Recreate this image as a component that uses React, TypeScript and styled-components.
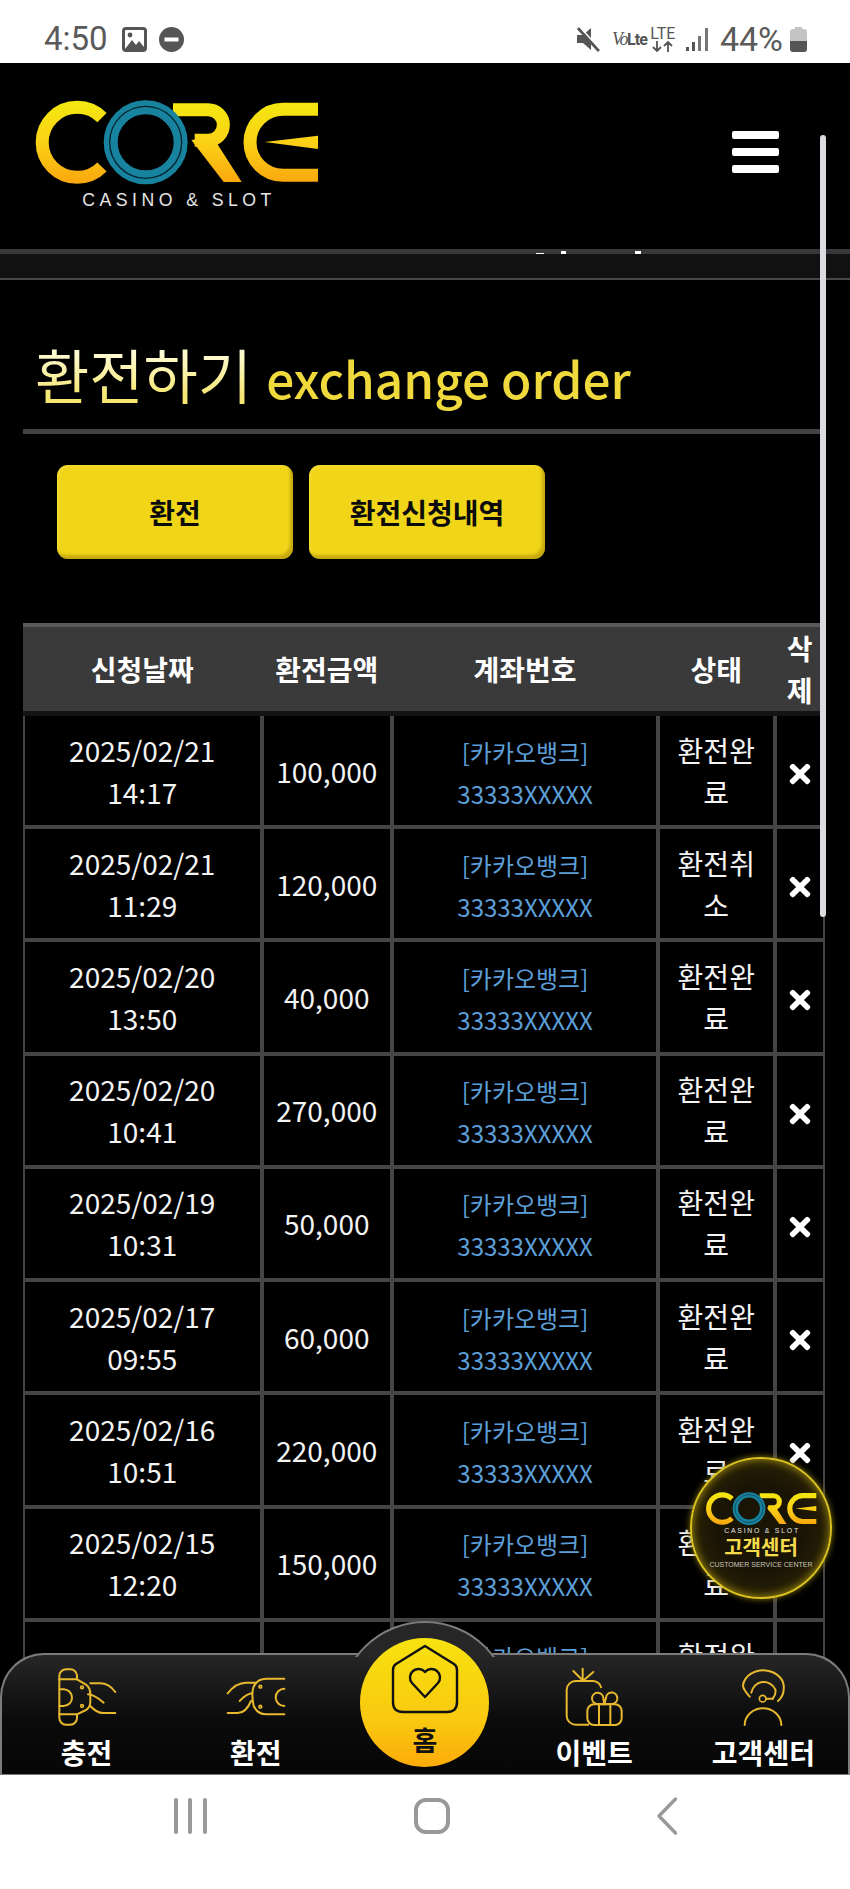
import styled, { createGlobalStyle } from "styled-components";
import { FaTimes } from "react-icons/fa";

type Order = {
  date: string;
  time: string;
  amount: string;
  status: string;
};

const orders: Order[] = [
  { date: "2025/02/21", time: "14:17", amount: "100,000", status: "환전완료" },
  { date: "2025/02/21", time: "11:29", amount: "120,000", status: "환전취소" },
  { date: "2025/02/20", time: "13:50", amount: "40,000", status: "환전완료" },
  { date: "2025/02/20", time: "10:41", amount: "270,000", status: "환전완료" },
  { date: "2025/02/19", time: "10:31", amount: "50,000", status: "환전완료" },
  { date: "2025/02/17", time: "09:55", amount: "60,000", status: "환전완료" },
  { date: "2025/02/16", time: "10:51", amount: "220,000", status: "환전완료" },
  { date: "2025/02/15", time: "12:20", amount: "150,000", status: "환전완료" },
  { date: "2025/02/15", time: "", amount: "", status: "환전완료" },
];

const columns = [238.5, 130.5, 266, 116.5, 50.5];

function Logo({ width }: { width: number }) {
  return (
    <svg viewBox="100 60 860 330" width={width} height={(width * 330) / 860}>
      <defs>
        <linearGradient id="coreGold" gradientUnits="userSpaceOnUse" x1="0" y1="62" x2="0" y2="312">
          <stop offset="0" stopColor="#f3e80f" />
          <stop offset="0.5" stopColor="#fbd116" />
          <stop offset="1" stopColor="#f9a60e" />
        </linearGradient>
      </defs>
      <g fill="none" stroke="url(#coreGold)" strokeWidth="39">
        <path d="M307 113 A105 105 0 1 0 307 261" />
        <path d="M520 89 H625 A46 46 0 0 1 625 181 H585" />
        <path d="M955 88 H850 A99 99 0 0 0 850 286 H955" />
      </g>
      <polygon points="575,180 640,172 726,306 672,306" fill="url(#coreGold)" />
      <polygon points="795,186 955,167 955,207" fill="url(#coreGold)" />
      <circle cx="438" cy="187" r="105" fill="none" stroke="#17839f" strokeWidth="42" />
      <circle cx="438" cy="187" r="108" fill="none" stroke="#04222c" strokeWidth="4" />
      <text x="248" y="378" textLength="567" fontFamily="Liberation Sans" fontSize="53" fill="#e6e6e6">
        CASINO &amp; SLOT
      </text>
    </svg>
  );
}

function ChargeIcon() {
  return (
    <NavSvg viewBox="165 203 180 180">
      <path d="M225 240 V228 A20 20 0 0 0 205 210 H192 A20 20 0 0 0 172 230 V356 A20 20 0 0 0 192 376 H205 A20 20 0 0 0 225 356 V345" />
      <path d="M172 240 H225 L252 256 Q265 265 265 285 V305 Q265 325 252 332 L225 345 H172" />
      <path d="M172 270 H185 A25 25 0 0 1 185 320 H172" />
      <path d="M265 252 H295 Q320 252 340 278" />
      <path d="M258 285 Q275 285 305 310" />
      <path d="M265 320 Q285 342 305 341 H340" />
      <circle cx="240" cy="264" r="4" />
      <circle cx="240" cy="320" r="4" />
    </NavSvg>
  );
}

function ExchangeIcon() {
  return (
    <NavSvg viewBox="675 203 180 180">
      <path d="M850 238 H795 Q770 238 758 262 Q750 280 758 320 Q770 345 795 345 H850" />
      <path d="M850 268 A26 26 0 0 0 850 320" />
      <path d="M680 282 Q705 250 735 250 H765" />
      <path d="M680 341 H710 Q735 341 750 305" />
      <path d="M716 305 Q735 285 752 282" />
      <circle cx="778" cy="262" r="4" />
      <circle cx="778" cy="322" r="4" />
    </NavSvg>
  );
}

function EventIcon() {
  return (
    <NavSvg viewBox="435 203 180 180">
      <path d="M508 376 H470 A27 27 0 0 1 443 350 V272 A27 27 0 0 1 470 245 H522 Q542 247 546 264" />
      <path d="M463 215 L490 242 M491 208 V242 M523 218 L495 242" />
      <rect x="505" y="315" width="103" height="62" rx="20" />
      <path d="M540 315 V377 M574 315 V377" />
      <path d="M556 315 L530 313 A17 17 0 1 1 553 297 L556 315 L561 296 A17 17 0 1 1 583 313 L556 315" />
    </NavSvg>
  );
}

function ServiceIcon() {
  return (
    <NavSvg viewBox="945 203 180 180">
      <path d="M995 292 Q975 270 975 258 A60 50 0 0 1 1097 270 Q1097 290 1080 305" />
      <path d="M1000 280 A38 38 0 0 1 1072 270 Q1075 285 1065 296" />
      <circle cx="1034" cy="298" r="10" />
      <path d="M1044 298 H1065" />
      <path d="M980 377 A55 50 0 0 1 1090 377" />
    </NavSvg>
  );
}

function App() {
  return (
    <Page>
      <GlobalStyle />
      <StatusBar>
        <StatusGroup>
          <Clock>4:50</Clock>
          <svg width="25" height="25" viewBox="0 0 25 25">
            <rect width="25" height="25" rx="4" fill="#555" />
            <rect x="3" y="3" width="19" height="19" rx="1" fill="#fff" />
            <path d="M3 22 L10 13 L14 18 L17 14 L22 20 V22 Z" fill="#555" />
            <circle cx="8" cy="8" r="2.4" fill="#555" />
          </svg>
          <svg width="25" height="25" viewBox="0 0 25 25">
            <circle cx="12.5" cy="12.5" r="12.5" fill="#555" />
            <rect x="5.5" y="10.5" width="14" height="4" fill="#fff" />
          </svg>
        </StatusGroup>
        <StatusGroup>
          <svg width="24" height="26" viewBox="0 0 24 26">
            <path d="M1 9 H7 L15 2 V24 L7 17 H1 Z" fill="#555" />
            <path d="M2 2 L23 25" stroke="#555" strokeWidth="3" />
            <path d="M3 0 L24 23" stroke="#fff" strokeWidth="1.5" />
          </svg>
          <VoLte>
            <i>Vo</i>
            <b>Lte</b>
          </VoLte>
          <LteStack>
            LTE
            <svg width="22" height="11" viewBox="0 0 22 11">
              <path d="M5 0 V10 M1 6 L5 10 L9 6 M16 11 V1 M12 5 L16 1 L20 5" fill="none" stroke="#555" strokeWidth="1.8" />
            </svg>
          </LteStack>
          <svg width="22" height="23" viewBox="0 0 22 23">
            <path d="M0 19 H3 V23 H0 Z M6 14 H9 V23 H6 Z" fill="#555" />
            <path d="M12 8 H15 V23 H12 Z M19 0 H22 V23 H19 Z" fill="#777" />
          </svg>
          <Percent>44%</Percent>
          <svg width="17" height="25" viewBox="0 0 17 25">
            <path d="M5 0 H12 V2 H14 Q17 2 17 5 V14 H0 V5 Q0 2 3 2 H5 Z" fill="#c4c4c4" />
            <path d="M0 14 H17 V22 Q17 25 14 25 H3 Q0 25 0 22 Z" fill="#555" />
          </svg>
        </StatusGroup>
      </StatusBar>

      <Screen>
        <Header>
          <Logo width={286.7} />
          <MenuButton>
            <MenuBar />
            <MenuBar />
            <MenuBar />
          </MenuButton>
        </Header>
        <NoticeBand>
          <NoticeTick $left={536} $width={8} $height={1} />
          <NoticeTick $left={561} $width={5} $height={3} />
          <NoticeTick $left={635} $width={6} $height={3} />
        </NoticeBand>

        <Main>
          <TitleRow>
            <TitleKo>환전하기</TitleKo>
            <TitleEn>exchange order</TitleEn>
          </TitleRow>
          <Tabs>
            <TabButton>환전</TabButton>
            <TabButton>환전신청내역</TabButton>
          </Tabs>
          <OrderTable>
            <colgroup>
              {columns.map((w) => (
                <Col key={w} $width={w} />
              ))}
            </colgroup>
            <thead>
              <tr>
                <HeadCell>신청날짜</HeadCell>
                <HeadCell>환전금액</HeadCell>
                <HeadCell>계좌번호</HeadCell>
                <HeadCell>상태</HeadCell>
                <HeadCell>삭제</HeadCell>
              </tr>
            </thead>
            <tbody>
              {orders.map((order, i) => (
                <tr key={i}>
                  <Cell>
                    {order.date}
                    <br />
                    {order.time}
                  </Cell>
                  <Cell>{order.amount}</Cell>
                  <AccountCell>
                    [카카오뱅크]
                    <br />
                    33333XXXXX
                  </AccountCell>
                  <Cell>{order.status}</Cell>
                  <DeleteCell>
                    <FaTimes size={30} color="#fff" />
                  </DeleteCell>
                </tr>
              ))}
            </tbody>
          </OrderTable>
        </Main>

        <ScrollThumb />

        <ServiceBadge>
          <Logo width={112} />
          <BadgeTitle>고객센터</BadgeTitle>
          <BadgeSub>CUSTOMER SERVICE CENTER</BadgeSub>
        </ServiceBadge>

        <BottomNav>
          <NavBump>
            <NavBumpCircle />
          </NavBump>
          <NavItem>
            <ChargeIcon />
            <NavLabel>충전</NavLabel>
          </NavItem>
          <NavItem>
            <ExchangeIcon />
            <NavLabel>환전</NavLabel>
          </NavItem>
          <NavItem>
            <HomeButton>
              <svg width="68" height="70" viewBox="0 0 68 70">
                <path
                  d="M34 2 L63 20 Q66 22 66 26 V58 Q66 68 56 68 H12 Q2 68 2 58 V26 Q2 22 5 20 Z"
                  fill="none"
                  stroke="#111"
                  strokeWidth="2.4"
                  strokeLinejoin="round"
                />
                <path
                  d="M34 53 L21 39 A8.5 8.5 0 0 1 34 28 A8.5 8.5 0 0 1 47 39 Z"
                  fill="none"
                  stroke="#111"
                  strokeWidth="2.4"
                  strokeLinejoin="round"
                />
              </svg>
              <HomeLabel>홈</HomeLabel>
            </HomeButton>
          </NavItem>
          <NavItem>
            <EventIcon />
            <NavLabel>이벤트</NavLabel>
          </NavItem>
          <NavItem>
            <ServiceIcon />
            <NavLabel>고객센터</NavLabel>
          </NavItem>
        </BottomNav>
      </Screen>

      <SystemNav>
        <RecentsIcon>
          <RecentsBar />
          <RecentsBar />
          <RecentsBar />
        </RecentsIcon>
        <HomeSquare />
        <svg width="20" height="38" viewBox="0 0 20 38">
          <path d="M18.5 2 L2 19 L18.5 36" fill="none" stroke="#999" strokeWidth="3.4" strokeLinecap="round" strokeLinejoin="round" />
        </svg>
      </SystemNav>
    </Page>
  );
}

const GlobalStyle = createGlobalStyle`
  html, body {
    margin: 0;
    padding: 0;
    background: #000;
    font-family: "Noto Sans CJK KR", "Noto Sans", sans-serif;
  }
`;

const Page = styled.div`
  width: 850px;
  height: 1889px;
  display: flex;
  flex-direction: column;
  overflow: hidden;
`;

const StatusBar = styled.div`
  height: 63px;
  flex: none;
  background: #fff;
  color: #555;
  display: flex;
  align-items: flex-start;
  justify-content: space-between;
  padding: 26px 43px 0 44px;
  box-sizing: border-box;
`;
const StatusGroup = styled.div`
  display: flex;
  align-items: center;
  gap: 12px;
  height: 26px;
`;
const Clock = styled.span`
  font: 400 33px/26px Roboto, sans-serif;
  margin-right: 2px;
  color: #5a5a5a;
`;
const VoLte = styled.span`
  font: 400 17px/20px "Liberation Serif", serif;
  width: 30px;
  white-space: nowrap;
  i {
    font-size: 18px;
    letter-spacing: -1.5px;
  }
  b {
    font: 700 16px/20px Roboto, sans-serif;
    letter-spacing: -0.8px;
  }
`;
const LteStack = styled.span`
  display: flex;
  flex-direction: column;
  align-items: center;
  font: 400 16px/14px Roboto, sans-serif;
  width: 26px;
  margin-left: -4px;
  margin-right: -2px;
`;
const Percent = styled.span`
  font: 400 34px/26px Roboto, sans-serif;
  color: #5a5a5a;
  margin-right: -5px;
`;

const Screen = styled.div`
  flex: 1;
  position: relative;
  background: #000;
  display: flex;
  flex-direction: column;
  overflow: hidden;
  min-height: 0;
`;

const Header = styled.header`
  height: 186px;
  flex: none;
  box-sizing: border-box;
  padding: 37px 71px 0 33px;
  display: flex;
  align-items: flex-start;
  justify-content: space-between;
`;
const MenuButton = styled.div`
  margin-top: 31px;
  width: 47px;
  display: flex;
  flex-direction: column;
  gap: 9px;
`;
const MenuBar = styled.span`
  height: 8px;
  border-radius: 2px;
  background: #fff;
`;

const NoticeBand = styled.div`
  height: 31px;
  flex: none;
  box-sizing: border-box;
  position: relative;
  background: #111;
  border-top: 5px solid #39383a;
  border-bottom: 2px solid #48474a;
`;
const NoticeTick = styled.span<{ $left: number; $width: number; $height: number }>`
  position: absolute;
  bottom: 24px;
  left: ${(p) => p.$left}px;
  width: ${(p) => p.$width}px;
  height: ${(p) => p.$height}px;
  background: #fff;
`;

const Main = styled.main`
  flex: 1;
  min-height: 0;
  padding: 0 25px 0 23px;
`;
const TitleRow = styled.div`
  display: flex;
  align-items: baseline;
  gap: 14px;
  height: 154px;
  box-sizing: border-box;
  padding: 54px 0 0 12px;
  border-bottom: 5px solid #444246;
  white-space: nowrap;
`;
const TitleKo = styled.h2`
  margin: 0;
  font-size: 59px;
  line-height: 80px;
  font-weight: 400;
  background: linear-gradient(#fffbd0 25%, #f6e56e 80%);
  -webkit-background-clip: text;
  background-clip: text;
  color: transparent;
`;
const TitleEn = styled.span`
  font-size: 49.5px;
  line-height: 80px;
  font-weight: 500;
  color: #efd93c;
`;

const Tabs = styled.div`
  display: flex;
  gap: 16px;
  margin: 31px 0 64px 34px;
`;
const TabButton = styled.button`
  width: 236px;
  height: 94px;
  padding: 0;
  border: 0;
  border-radius: 11px;
  background: #f0d518;
  box-shadow: inset -3px -4px 3px rgba(120, 90, 0, 0.35), inset 2px 2px 2px rgba(255, 240, 120, 0.25);
  color: #0b0b0b;
  font: 700 28px "Noto Sans CJK KR", sans-serif;
`;

const OrderTable = styled.table`
  width: 802px;
  table-layout: fixed;
  border-collapse: separate;
  border-spacing: 0;
  color: #f4f4f4;
  font-size: 28px;
  line-height: 42px;
  text-align: center;
`;
const Col = styled.col<{ $width: number }>`
  width: ${(p) => p.$width}px;
`;
const HeadCell = styled.th`
  padding: 0 2px;
  background: #3a3a3a;
  border-top: 4px solid #5a5a5a;
  border-bottom: 5px solid #141414;
  font-weight: 700;
  font-size: 28px;
  color: #fff;
`;
const Cell = styled.td`
  height: 113.25px;
  box-sizing: border-box;
  padding: 0 10px;
  border: 2px solid #454545;
  tr:first-child > & {
    border-top: 0;
    height: 111px;
  }
`;
const AccountCell = styled(Cell)`
  color: #5c9fd8;
  font-size: 24px;
  padding-top: 4px;
`;
const DeleteCell = styled(Cell)`
  padding: 13px 0 0;
`;

const ScrollThumb = styled.div`
  position: absolute;
  top: 72px;
  right: 24px;
  width: 6px;
  height: 782px;
  border-radius: 3px;
  background: #dedbe0;
`;

const ServiceBadge = styled.div`
  position: absolute;
  top: 1394px;
  left: 690px;
  width: 142px;
  height: 142px;
  box-sizing: border-box;
  border-radius: 50%;
  border: 2px solid #d9c11e;
  background: radial-gradient(circle, #1a1405 45%, #2c2406 80%, #544a0a 100%);
  box-shadow: 0 0 6px #8d7c10, inset 0 0 10px #a8930f;
  padding-top: 33px;
  display: flex;
  flex-direction: column;
  align-items: center;
`;
const BadgeTitle = styled.div`
  font-size: 20px;
  line-height: 22px;
  font-weight: 700;
  color: #f6dc4b;
  margin-top: 1px;
`;
const BadgeSub = styled.div`
  font: 400 7px/10px "Liberation Sans", sans-serif;
  color: #c9c5b8;
  white-space: nowrap;
  margin-top: 2px;
`;

const BottomNav = styled.nav`
  position: absolute;
  left: 0;
  right: 0;
  bottom: 0;
  height: 122px;
  box-sizing: border-box;
  display: grid;
  grid-template-columns: repeat(5, 1fr);
  border: 2px solid #7c7c7c;
  border-bottom-width: 1px;
  border-radius: 44px 44px 0 0;
  background: linear-gradient(#262626, #0b0b0b 55%, #060606);
`;
const NavBump = styled.div`
  position: absolute;
  top: -34px;
  left: 50%;
  margin-left: -88px;
  width: 176px;
  height: 36px;
  overflow: hidden;
`;
const NavBumpCircle = styled.div`
  width: 172px;
  height: 172px;
  margin-left: 2px;
  box-sizing: border-box;
  border-radius: 50%;
  border: 2px solid #7c7c7c;
  background: #262626;
`;
const NavItem = styled.div`
  position: relative;
  display: flex;
  flex-direction: column;
  align-items: center;
  padding-top: 12px;
  color: #fff;
`;
const NavSvg = styled.svg`
  width: 60px;
  height: 60px;
  fill: none;
  stroke: #e8b92f;
  stroke-width: 6;
  stroke-linecap: round;
  stroke-linejoin: round;
  circle {
    stroke-width: 5;
  }
`;
const NavLabel = styled.span`
  font-size: 28px;
  line-height: 30px;
  font-weight: 700;
  margin-top: 10px;
  white-space: nowrap;
`;
const HomeButton = styled.div`
  position: absolute;
  top: -17px;
  left: 20px;
  width: 129px;
  height: 129px;
  box-sizing: border-box;
  border-radius: 50%;
  padding-top: 6px;
  background: linear-gradient(#f7e20f, #f9c80f 65%, #fcab0a);
  display: flex;
  flex-direction: column;
  align-items: center;
`;
const HomeLabel = styled.span`
  font-size: 27px;
  line-height: 30px;
  font-weight: 700;
  color: #111;
  margin-top: 11px;
`;

const SystemNav = styled.div`
  height: 114px;
  flex: none;
  background: #fff;
  display: flex;
  align-items: center;
  justify-content: center;
  gap: 207px;
  padding-bottom: 32px;
  box-sizing: border-box;
`;
const RecentsIcon = styled.div`
  width: 33px;
  height: 36px;
  display: flex;
  justify-content: space-between;
`;
const RecentsBar = styled.span`
  width: 4px;
  border-radius: 2px;
  background: #999;
`;
const HomeSquare = styled.div`
  width: 36px;
  height: 36px;
  box-sizing: border-box;
  border: 4px solid #999;
  border-radius: 12px;
`;

export default App;
